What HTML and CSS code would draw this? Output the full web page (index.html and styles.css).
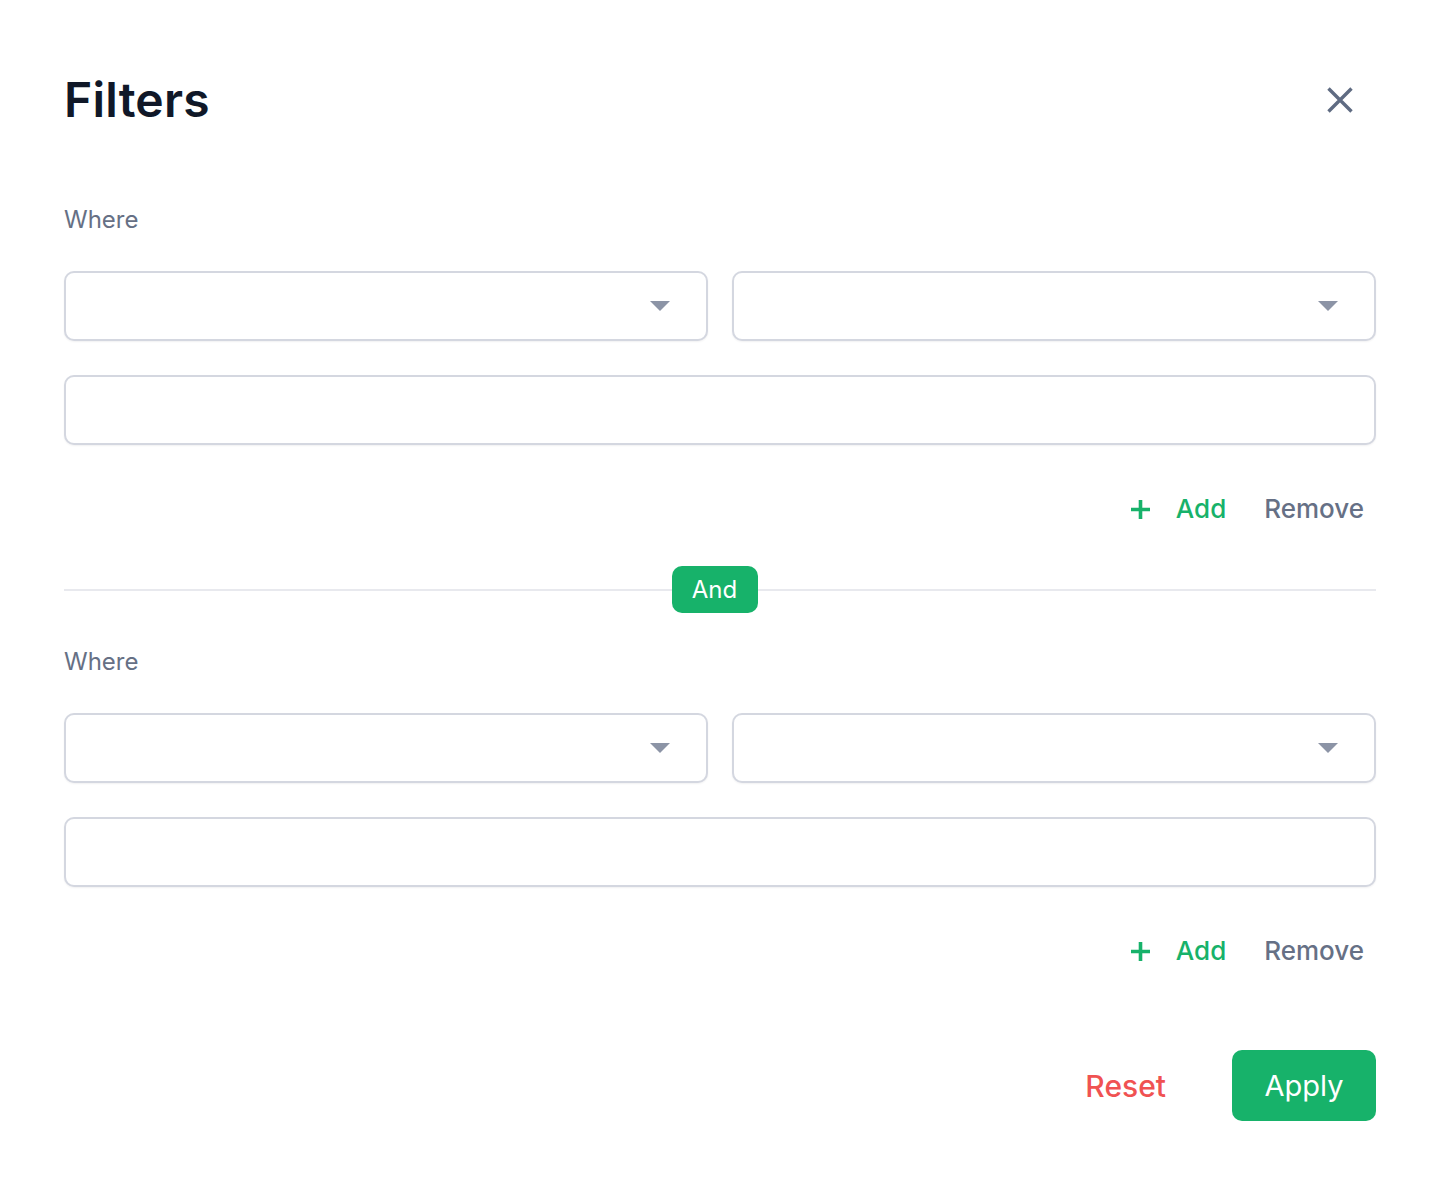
FILE: index.html
```html
<!DOCTYPE html>
<html lang="en">
<head>
<meta charset="utf-8">
<title>Filters</title>
<link rel="stylesheet" href="styles.css">
</head>
<body>
<div class="dialog">
  <header class="header">
    <h1 class="title">Filters</h1>
    <button class="close" aria-label="Close">
      <svg width="26" height="26" viewBox="0 0 26 26" fill="none" stroke="currentColor" stroke-width="3.4" stroke-linecap="butt"><path d="M1.5 1.5L24.5 24.5M24.5 1.5L1.5 24.5"/></svg>
    </button>
  </header>

  <section class="group">
    <div class="label">Where</div>
    <div class="selects">
      <div class="select"><span class="caret"></span></div>
      <div class="select"><span class="caret"></span></div>
    </div>
    <div class="input"></div>
    <div class="actions">
      <button class="add"><svg width="19" height="19" viewBox="0 0 19 19" fill="none" stroke="currentColor" stroke-width="3.6"><path d="M9.5 0V19M0 9.5H19"/></svg><span>Add</span></button>
      <button class="remove">Remove</button>
    </div>
  </section>

  <div class="divider"><span class="and">And</span></div>

  <section class="group second">
    <div class="label">Where</div>
    <div class="selects">
      <div class="select"><span class="caret"></span></div>
      <div class="select"><span class="caret"></span></div>
    </div>
    <div class="input"></div>
    <div class="actions">
      <button class="add"><svg width="19" height="19" viewBox="0 0 19 19" fill="none" stroke="currentColor" stroke-width="3.6"><path d="M9.5 0V19M0 9.5H19"/></svg><span>Add</span></button>
      <button class="remove">Remove</button>
    </div>
  </section>

  <footer class="footer">
    <button class="reset">Reset</button>
    <button class="apply">Apply</button>
  </footer>
</div>
</body>
</html>
```

FILE: styles.css
```css
* { box-sizing: border-box; }
html, body { margin: 0; padding: 0; background: #fff; }
body { font-family: Inter, "Noto Sans", sans-serif; color: #101828; }
button { font-family: inherit; background: none; border: 0; padding: 0; cursor: pointer; }

.dialog { width: 1440px; padding: 72px 64px 0 64px; }

.header { display: flex; align-items: center; justify-content: space-between; height: 56px; }
.title { margin: 0; font-size: 48px; line-height: 56px; font-weight: 600; color: #101828; letter-spacing: 0.2px; }
.close { color: #5f6b82; width: 26px; height: 26px; margin-right: 23px; display: flex; }

.group { padding-top: 77px; }
.group.second { padding-top: 34px; }
.label { font-size: 24px; line-height: 30px; color: #667085; }

.selects { display: grid; grid-template-columns: 1fr 1fr; gap: 24px; margin-top: 36px; }
.select, .input {
  height: 70px; border: 2px solid #d4d7e0; border-radius: 10px; background: #fff;
  box-shadow: 0 1px 2px rgba(16, 24, 40, 0.06);
}
.select { position: relative; display: flex; align-items: center; justify-content: flex-end; padding-right: 36px; }
.caret { width: 0; height: 0; border-left: 10px solid transparent; border-right: 10px solid transparent; border-top: 10px solid #8c94a6; }
.input { margin-top: 34px; }

.actions { display: flex; justify-content: flex-end; align-items: center; gap: 38px; margin-top: 48px; padding-right: 12px; height: 32px; }
.add { display: flex; align-items: center; gap: 26px; color: #17b26a; font-size: 26px; line-height: 32px; font-weight: 500; }
.remove { color: #667085; font-size: 26px; line-height: 32px; font-weight: 500; }

.divider { margin-top: 41px; height: 47px; display: flex; align-items: center; justify-content: center; position: relative; }
.divider::before { content: ""; position: absolute; left: 0; right: 0; top: 23px; height: 2px; background: #e8e9ee; }
.and { position: relative; background: #17b26a; color: #fff; font-size: 24px; line-height: 47px; height: 47px; width: 86px; text-align: center; border-radius: 10px; margin-right: 11px; }

.footer { display: flex; justify-content: flex-end; align-items: center; gap: 66px; margin-top: 83px; }
.reset { color: #f05252; font-size: 30px; font-weight: 500; line-height: 36px; }
.apply { background: #17b26a; color: #fff; font-size: 29px; font-weight: 400; width: 144px; height: 71px; border-radius: 10px; }
```
